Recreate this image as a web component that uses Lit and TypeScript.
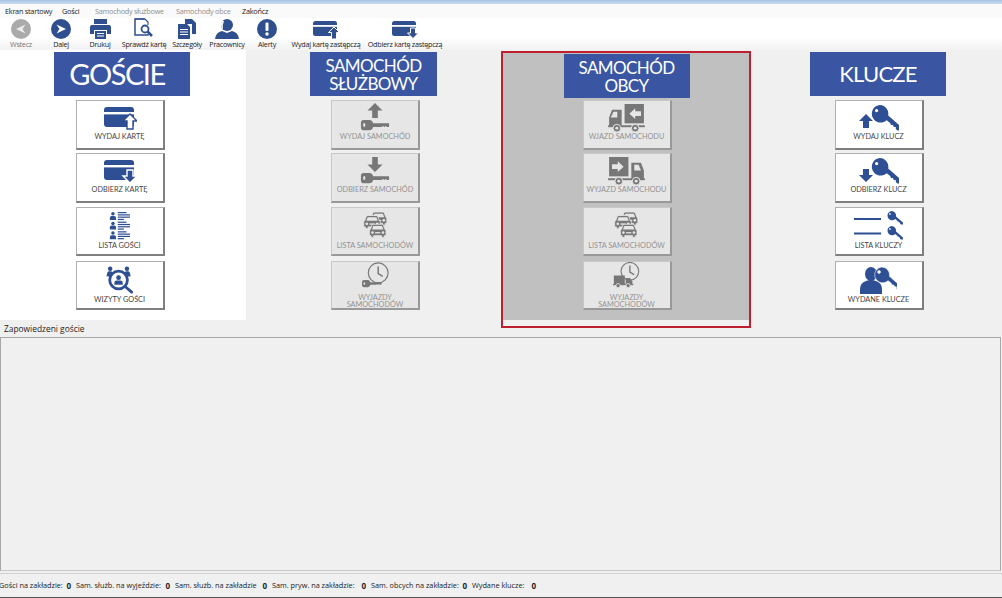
import { LitElement, html, css, svg } from "lit";
import { customElement } from "lit/decorators.js";

const card = (down: boolean) => svg`<svg class="ico" width="34" height="24" viewBox="0 0 34 24">
  <rect x="1" y="1" width="30" height="20" rx="3" fill="currentColor"/>
  <rect x="1" y="6" width="30" height="2.4" fill="#fff"/>
  ${down
    ? svg`<path d="M24 11h6v6h4l-7 7-7-7h4z" fill="currentColor" stroke="#fff" stroke-width="1.4"/>`
    : svg`<path d="M27 8l7 7h-4v8h-6v-8h-4z" fill="#fff" stroke="currentColor" stroke-width="1.4"/>`}
</svg>`;

const personList = svg`<svg class="ico" width="21" height="28" viewBox="0 0 24 32" fill="currentColor">
  ${[0, 11, 22].map(
    (y) => svg`<circle cx="4.5" cy="${y + 2}" r="2"/><path d="M1 ${y + 9}v-2.5q0-2 2-2h3q2 0 2 2v2.5z"/>
    <rect x="10" y="${y}" width="10" height="1.4"/><rect x="10" y="${y + 2.6}" width="14" height="1.4"/><rect x="10" y="${y + 5.2}" width="14" height="1.4"/><rect x="10" y="${y + 7.8}" width="7" height="1.4"/>`
  )}
</svg>`;

const visits = svg`<svg class="ico" width="27" height="28" viewBox="0 0 28 30" fill="currentColor">
  <circle cx="4" cy="3" r="2.4"/><circle cx="22" cy="3" r="2.4"/>
  <path d="M0 11l1-4q.5-1.500 2-1.500h2l3 2-3 4z"/><path d="M26 11l-1-4q-.5-1.500-2-1.500h-2l-3 2 3 4z"/>
  <circle cx="13" cy="15" r="9.500" fill="none" stroke="currentColor" stroke-width="3"/>
  <circle cx="13" cy="12.500" r="2.600"/><path d="M8.500 20v-2q0-2.500 2.500-2.500h4q2.500 0 2.500 2.500v2z"/>
  <path d="M20 22l7 6" stroke="currentColor" stroke-width="3" stroke-linecap="round"/>
</svg>`;

const hKey = (x: number, y: number) => svg`<g transform="translate(${x} ${y})">
  <path d="M3 0h6q3 0 4 3.500h17v4h-2l-1.500-1-1.500 1-1.500-1-1.500 1H13q-1 3.500-4 3.500H3q-3 0-3-3V3q0-3 3-3z" fill="currentColor"/>
  <ellipse cx="3.500" cy="5.500" rx="1.200" ry="2.200" fill="#e6e6e6"/>
</g>`;

const serviceKey = (down: boolean) => svg`<svg class="ico" width="30" height="30" viewBox="0 0 32 32">
  ${down
    ? svg`<path d="M13 1h6v8h5l-8 8-8-8h5z" fill="currentColor"/>`
    : svg`<path d="M16 0l8 8h-5v8h-6V8H8z" fill="currentColor"/>`}
  ${hKey(1, 18)}
</svg>`;

const oneCar = (x: number, y: number, bg: string) => svg`<g transform="translate(${x} ${y})">
  <path d="M3.500 1Q4 0 5.500 0h9q1.500 0 2 1l2 5q1 .5 1 2v5h-2v2h-3v-2H5.500v2h-3v-2h-2V8q0-1.500 1-2z" fill="currentColor" stroke="${bg}" stroke-width="1"/>
  <path d="M5 2h10l1.500 4h-13z" fill="${bg}"/>
  <circle cx="4" cy="9.500" r="1.500" fill="${bg}"/><circle cx="16" cy="9.500" r="1.500" fill="${bg}"/>
  <rect x="7" y="9" width="6" height="1.500" fill="${bg}"/>
</g>`;

const cars = svg`<svg class="ico" width="25" height="28" viewBox="0 0 28 32">
  ${oneCar(7.500, 0, "#e6e6e6")}${oneCar(0, 4, "#e6e6e6")}${oneCar(6.500, 14, "#e6e6e6")}
</svg>`;

const clockKey = svg`<svg class="ico" width="27" height="27" viewBox="0 0 30 30">
  <circle cx="18" cy="12" r="11" fill="none" stroke="currentColor" stroke-width="1.300"/>
  <path d="M18 5v8l5 3" fill="none" stroke="currentColor" stroke-width="1.600"/>
  <g transform="translate(0 20) scale(.72)">${hKey(0, 0)}</g>
</svg>`;

const truckIn = svg`<svg class="ico" width="37" height="29" viewBox="0 0 38 30" fill="currentColor">
  <rect x="17" y="0" width="20" height="20"/>
  <path d="M22 10l6-5.500v3h6v5h-6v3z" fill="#e6e6e6"/>
  <path d="M4 6h10v17H1v-9z"/><path d="M5.500 8h4v6H2.800z" fill="#e6e6e6"/>
  <rect x="0" y="22" width="38" height="2"/>
  <circle cx="9" cy="25" r="4" stroke="#e6e6e6"/><circle cx="9" cy="25" r="1.500" fill="#e6e6e6"/>
  <circle cx="28" cy="25" r="4" stroke="#e6e6e6"/><circle cx="28" cy="25" r="1.500" fill="#e6e6e6"/>
</svg>`;

const truckOut = svg`<svg class="ico" width="37" height="29" viewBox="0 0 38 30" fill="currentColor">
  <rect x="1" y="0" width="20" height="20"/>
  <path d="M16 10l-6-5.500v3H4v5h6v3z" fill="#e6e6e6"/>
  <path d="M24 6h10l3 8v9H24z"/><path d="M27 8h4.500l2.500 6h-7z" fill="#e6e6e6"/>
  <rect x="0" y="22" width="38" height="2"/>
  <circle cx="11" cy="25" r="4" stroke="#e6e6e6"/><circle cx="11" cy="25" r="1.500" fill="#e6e6e6"/>
  <circle cx="29" cy="25" r="4" stroke="#e6e6e6"/><circle cx="29" cy="25" r="1.500" fill="#e6e6e6"/>
</svg>`;

const clockTruck = svg`<svg class="ico" width="27" height="27" viewBox="0 0 32 32" fill="currentColor">
  <circle cx="20" cy="11" r="10.500" fill="none" stroke="currentColor" stroke-width="1.300"/>
  <path d="M20 4v8l5 3" fill="none" stroke="currentColor" stroke-width="1.600"/>
  <rect x="1" y="16" width="13" height="11"/><path d="M15 19h5l3 4v4h-8z"/>
  <rect x="0" y="26" width="24" height="1.500"/>
  <circle cx="6" cy="28" r="2.500" stroke="#e6e6e6"/><circle cx="18" cy="28" r="2.500" stroke="#e6e6e6"/>
</svg>`;

const bigKey = (x: number, y: number, s: number) => svg`<g transform="translate(${x} ${y}) scale(${s})">
  <path d="M11 0a11 11 0 0 1 10.500 13l16.500 14.500v4.500h-5l-2-2v-2.500h-2.500l-1-2.500h-2.500l-1-2.500-4.500-3.500A11 11 0 1 1 11 0z" fill="currentColor"/>
  <circle cx="7" cy="7" r="2" fill="#fff"/>
</g>`;

const keyArrow = (down: boolean) => svg`<svg class="ico" width="40" height="28" viewBox="0 0 40 28">
  ${down
    ? svg`<path d="M3 12h6v6h4l-7 7-7-7h4z" fill="currentColor" transform="translate(1 0)"/>`
    : svg`<path d="M7 10l7 7h-4v7H4v-7H0z" fill="currentColor"/>`}
  ${bigKey(12, 1, 0.8)}
</svg>`;

const keyList = svg`<svg class="ico" width="49" height="30" viewBox="0 0 49 30">
  <rect x="0" y="7" width="27" height="2" fill="currentColor"/>
  <rect x="0" y="21.500" width="27" height="2" fill="currentColor"/>
  ${bigKey(33, 0, 0.42)}${bigKey(33, 15, 0.42)}
</svg>`;

const issuedKeys = svg`<svg class="ico" width="37" height="27" viewBox="0 0 37 27" fill="currentColor">
  <ellipse cx="11" cy="7" rx="6" ry="7"/><path d="M0 27v-5q0-6 6-8 5-2 10 0 6 2 6 8v5z"/>
  <g stroke="#fff" stroke-width=".8">${bigKey(14, 0, 0.72)}</g>
</svg>`;

const back = svg`<svg width="20" height="20" viewBox="0 0 20 20"><circle cx="10" cy="10" r="10" fill="#aaa"/><path d="M14.500 5.500L5 10l9.500 4.500-3-4.500z" fill="#ececec"/></svg>`;
const next = svg`<svg width="20" height="20" viewBox="0 0 20 20"><circle cx="10" cy="10" r="10" fill="#2f4f8f"/><path d="M5.500 5.500L15 10l-9.500 4.500 3-4.500z" fill="#fff"/></svg>`;
const print = svg`<svg width="21" height="20" viewBox="0 0 21 20" fill="#2f4f8f"><path d="M4 0h13v5H4z"/><path d="M2 6h17q2 0 2 2v7h-4v-4H4v4H0V8q0-2 2-2z"/><path d="M5 12h11v8H5z"/><path d="M7 14h7v1H7zM7 16.500h7v1H7z" fill="#fff"/></svg>`;
const check = svg`<svg width="20" height="21" viewBox="0 0 20 21" fill="none" stroke="#2f4f8f"><path d="M14 16v1H1V1h9v1" stroke-width="1.500"/><path d="M1 1h10l3 3v3" stroke-width="1.200"/><circle cx="11" cy="11" r="3.500" stroke-width="1.800"/><path d="M13.500 13.500L18 18" stroke-width="2.500"/></svg>`;
const details = svg`<svg width="18" height="20" viewBox="0 0 18 20" fill="#2f4f8f"><path d="M7 0h7l4 4v11h-4V5H7z"/><path d="M0 5h9l3 3v12H0z"/><path d="M2 10h8v1H2zM2 12.500h8v1H2zM2 15h8v1H2z" fill="#fff"/></svg>`;
const people = svg`<svg width="24" height="20" viewBox="0 0 24 20" fill="#2f4f8f"><circle cx="12" cy="6" r="6"/><path d="M0 20q1-7 7-8l5 2 5-2q6 1 7 8z"/><path d="M7 2q-2 3 0 7l1 1q-1-4 1-8z" fill="#fff"/></svg>`;
const alert = svg`<svg width="20" height="20" viewBox="0 0 20 20"><circle cx="10" cy="10" r="10" fill="#2f4f8f"/><rect x="8.500" y="3.500" width="3" height="8.500" rx="1" fill="#fff"/><circle cx="10" cy="15" r="1.700" fill="#fff"/></svg>`;
const tbCard = (down: boolean) => svg`<svg width="27" height="18" viewBox="0 0 27 18">
  <rect x="0" y="0" width="24" height="15" rx="2.500" fill="#2f4f8f"/><rect x="0" y="4" width="24" height="1.800" fill="#fff"/>
  ${down
    ? svg`<path d="M18.500 7h5v5h3l-5.500 5.500L15.500 12h3z" fill="#2f4f8f" stroke="#fff"/>`
    : svg`<path d="M21 6l5.500 5.500h-3V18h-5v-6.500h-3z" fill="#2f4f8f" stroke="#fff"/>`}
</svg>`;

type Btn = { icon: unknown; label: string[] };

const columns: {
  cls: string;
  title: string[];
  buttons: Btn[];
}[] = [
  {
    cls: "guests",
    title: ["GOŚCIE"],
    buttons: [
      { icon: card(false), label: ["WYDAJ KARTĘ"] },
      { icon: card(true), label: ["ODBIERZ KARTĘ"] },
      { icon: personList, label: ["LISTA GOŚCI"] },
      { icon: visits, label: ["WIZYTY GOŚCI"] },
    ],
  },
  {
    cls: "service off",
    title: ["SAMOCHÓD", "SŁUŻBOWY"],
    buttons: [
      { icon: serviceKey(false), label: ["WYDAJ SAMOCHÓD"] },
      { icon: serviceKey(true), label: ["ODBIERZ SAMOCHÓD"] },
      { icon: cars, label: ["LISTA SAMOCHODÓW"] },
      { icon: clockKey, label: ["WYJAZDY", "SAMOCHODÓW"] },
    ],
  },
  {
    cls: "foreign off",
    title: ["SAMOCHÓD", "OBCY"],
    buttons: [
      { icon: truckIn, label: ["WJAZD SAMOCHODU"] },
      { icon: truckOut, label: ["WYJAZD SAMOCHODU"] },
      { icon: cars, label: ["LISTA SAMOCHODÓW"] },
      { icon: clockTruck, label: ["WYJAZDY", "SAMOCHODÓW"] },
    ],
  },
  {
    cls: "keys",
    title: ["KLUCZE"],
    buttons: [
      { icon: keyArrow(false), label: ["WYDAJ KLUCZ"] },
      { icon: keyArrow(true), label: ["ODBIERZ KLUCZ"] },
      { icon: keyList, label: ["LISTA KLUCZY"] },
      { icon: issuedKeys, label: ["WYDANE KLUCZE"] },
    ],
  },
];

const tools: { icon: unknown; label: string; off?: boolean }[] = [
  { icon: back, label: "Wstecz", off: true },
  { icon: next, label: "Dalej" },
  { icon: print, label: "Drukuj" },
  { icon: check, label: "Sprawdź kartę" },
  { icon: details, label: "Szczegóły" },
  { icon: people, label: "Pracownicy" },
  { icon: alert, label: "Alerty" },
  { icon: tbCard(false), label: "Wydaj kartę zastępczą" },
  { icon: tbCard(true), label: "Odbierz kartę zastępczą" },
];

const stats = [
  "Gości na zakładzie:",
  "Sam. służb. na wyjeździe:",
  "Sam. służb. na zakładzie",
  "Sam. pryw. na zakładzie:",
  "Sam. obcych na zakładzie:",
  "Wydane klucze:",
];

@customElement("app-root")
export class AppRoot extends LitElement {
  static styles = css`
    :host {
      display: flex;
      flex-direction: column;
      width: 1002px;
      height: 598px;
      overflow: hidden;
      background: #f0f0f0;
      font-family: "Open Sans", "Liberation Sans", sans-serif;
      color: #222;
    }
    .title {
      height: 4px;
      background: linear-gradient(#a9c5e2, #c8dcef);
    }
    .menu {
      height: 14px;
      background: #fafafa;
      display: grid;
      grid-template-columns: 57px 33px 81px 66px auto;
      padding-left: 5px;
      align-items: center;
      font-size: 7.300px;
      letter-spacing: -0.250px;
      color: #222;
    }
    .menu span {
      white-space: nowrap;
    }
    .menu .off {
      color: #8f8f8f;
    }
    .tools {
      height: 32px;
      box-sizing: border-box;
      background: linear-gradient(#fff 0, #fff 60%, #f2f2f2 100%);
      display: grid;
      grid-template-columns: 42px 38px 40px 48px 38px 42px 38px 80px 78px;
    }
    .tool {
      display: flex;
      flex-direction: column;
      align-items: center;
      justify-content: flex-end;
      gap: 1px;
      font-size: 7.200px;
      letter-spacing: -0.250px;
      white-space: nowrap;
      height: 30px;
      line-height: 8px;
    }
    .tool.off {
      color: #777;
    }
    .main {
      height: 278px;
      display: grid;
      grid-template-columns: 246px 255px 250px 251px;
      align-items: start;
    }
    .col {
      box-sizing: border-box;
      display: flex;
      flex-direction: column;
      align-items: center;
    }
    .head {
      box-sizing: border-box;
      background: #3a56a3;
      color: #fff;
      font-family: Lato, "Liberation Sans", sans-serif;
      display: flex;
      flex-direction: column;
      align-items: center;
      justify-content: center;
      height: 44px;
      margin-bottom: 4px;
      padding-top: 2px;
      font-size: 17px;
      letter-spacing: -0.600px;
      line-height: 18px;
    }
    .guests {
      background: #fff;
      height: 270px;
      padding: 2px 3px 0 0;
    }
    .guests .head {
      width: 136px;
      padding: 0 9px 0 0;
      font-size: 29px;
      letter-spacing: -1.500px;
    }
    .guests .btns {
      margin-left: -3px;
    }
    .service {
      padding-top: 2px;
    }
    .service .head {
      width: 127px;
    }
    .service .btns {
      margin-left: 4px;
    }
    .foreign {
      margin-top: 1px;
      height: 277px;
      border: 2px solid #bf2030;
      padding: 1px 0 0 1px;
      background: linear-gradient(#c0c0c0 267px, #f0f0f0 267px);
    }
    .foreign .head {
      width: 126px;
      margin-bottom: 2px;
      padding-top: 1px;
    }
    .foreign .btns {
      margin-left: 1px;
    }
    .keys {
      padding: 2px 0 0 3px;
    }
    .keys .head {
      width: 136px;
      padding: 0;
      font-size: 22px;
      letter-spacing: -0.800px;
    }
    .keys .btns {
      margin-left: 2px;
    }
    .btns {
      display: grid;
      grid-template-rows: 53px 54px 54px 49px;
      justify-items: center;
    }
    .btn {
      box-sizing: border-box;
      width: 89px;
      height: 50px;
      background: #fff;
      border: 1px solid #b0b0b0;
      border-right: 2px solid #7f7f7f;
      border-bottom: 2px solid #7f7f7f;
      display: flex;
      flex-direction: column;
      align-items: center;
      padding: 2px 0 8px;
      color: #2f4f94;
    }
    .btn:nth-child(n + 3) {
      height: 49px;
      padding-bottom: 5px;
    }
    .off .btn {
      background: #e6e6e6;
      border-color: #c8c8c8 #999 #999 #c8c8c8;
      color: #777;
    }
    .btn.two {
      padding-top: 0;
      padding-bottom: 0;
    }
    .ibox {
      flex: 1;
      min-height: 0;
      display: flex;
      align-items: center;
      justify-content: center;
    }
    .two .ibox {
      align-items: flex-start;
    }
    .ico {
      display: block;
      flex: none;
    }
    .lbl {
      font-family: Lato, "Liberation Sans", sans-serif;
      font-size: 7.300px;
      line-height: 6.500px;
      color: #444;
      text-align: center;
      white-space: nowrap;
    }
    .off .lbl {
      color: #939393;
    }
    .caption {
      height: 13px;
      margin-top: -4px;
      font-size: 8.400px;
      line-height: 10px;
      padding-left: 4px;
      white-space: nowrap;
    }
    .panel {
      box-sizing: border-box;
      height: 234px;
      margin-right: 1px;
      background: #f0f0f0;
      border: 1px solid #a8a8a8;
      border-bottom-color: #c8c8c8;
    }
    .status {
      flex: 1;
      box-sizing: border-box;
      margin-top: 2px;
      border-top: 1px solid #d0d0d0;
      border-bottom: 1px solid #555;
      display: grid;
      grid-template-columns: 76px 99px 97px 99px 101px auto;
      align-items: center;
      font-size: 7.300px;
    }
    .stat {
      display: flex;
      justify-content: space-between;
      white-space: nowrap;
      padding-right: 5px;
    }
    .stat:first-child {
      margin-left: -1px;
    }
    .stat:last-child {
      justify-content: flex-start;
      gap: 7px;
    }
    .stat b {
      font-weight: 700;
      font-size: 8px;
    }
  `;

  render() {
    return html`
      <div class="title"></div>
      <div class="menu">
        <span>Ekran startowy</span><span>Gości</span>
        <span class="off">Samochody służbowe</span><span class="off">Samochody obce</span>
        <span>Zakończ</span>
      </div>
      <div class="tools">
        ${tools.map(
          (t) => html`<div class="tool ${t.off ? "off" : ""}">${t.icon}<span>${t.label}</span></div>`
        )}
      </div>
      <div class="main">
        ${columns.map(
          (c) => html`<section class="col ${c.cls}">
            <div class="head">${c.title.map((l) => html`<span>${l}</span>`)}</div>
            <div class="btns">
              ${c.buttons.map(
                (b) => html`<div class="btn ${b.label.length > 1 ? "two" : ""}">
                  <div class="ibox">${b.icon}</div>
                  <div class="lbl">${b.label.map((l) => html`<div>${l}</div>`)}</div>
                </div>`
              )}
            </div>
          </section>`
        )}
      </div>
      <div class="caption">Zapowiedzeni goście</div>
      <div class="panel"></div>
      <div class="status">
        ${stats.map((s) => html`<div class="stat"><span>${s}</span><b>0</b></div>`)}
      </div>
    `;
  }
}
